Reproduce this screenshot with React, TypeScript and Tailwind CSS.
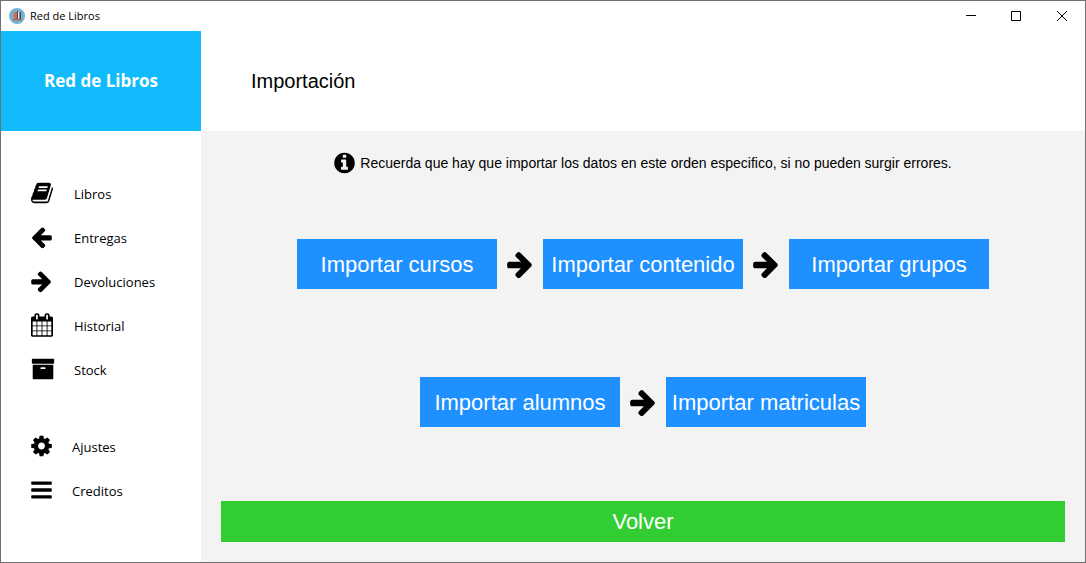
import type { ReactNode } from "react";

type IconProps = { viewBox: string; d: string; className: string };

function Icon({ viewBox, d, className }: IconProps) {
  return (
    <svg viewBox={viewBox} className={className} fill="currentColor" aria-hidden="true">
      <path d={d} />
    </svg>
  );
}

const BOOK =
  "M1703 478q40 57 18 129l-275 906q-19 64-76.5 107.5t-122.5 43.5h-923q-77 0-148.5-53.5t-99.5-131.5q-24-67-2-127 0-4 3-27t4-37q1-8-3-21.5t-3-19.5q2-11 8-21t16.5-23.5 16.5-23.5q23-38 45-91.5t30-91.5q3-10 .5-30t-.5-28q3-11 17-28t17-23q21-36 42-92t25-90q1-9-2.5-32t.5-28q4-13 22-30.5t22-22.5q19-26 42.5-84.5t27.5-96.5q1-8-3-25.5t-2-26.5q2-8 9-18t18-23 17-21q8-12 16.5-30.5t15-35 16-36 19.5-32 26.5-23.5 36-11.5 47.5 5.5l-1 3q38-9 51-9h761q74 0 114 56t18 130l-274 906q-36 119-71.5 153.5t-128.5 34.5h-869q-27 0-38 15-11 16-1 43 24 70 144 70h923q29 0 56-15.5t35-41.5l300-987q7-22 5-57 38 15 59 43zm-1064 2q-4 13 2 22.5t20 9.5h608q13 0 25.5-9.5t16.5-22.5l21-64q4-13-2-22.5t-20-9.5h-608q-13 0-25.5 9.5t-16.5 22.5zm-83 256q-4 13 2 22.5t20 9.5h608q13 0 25.5-9.5t16.5-22.5l21-64q4-13-2-22.5t-20-9.5h-608q-13 0-25.5 9.5t-16.5 22.5z";
const ARROW_LEFT =
  "M1664 896v128q0 53-32.5 90.5t-84.5 37.5h-704l293 294q38 36 38 90t-38 90l-75 76q-37 37-90 37-52 0-91-37l-651-652q-37-37-37-90 0-52 37-91l651-650q38-38 91-38 52 0 90 38l75 74q38 38 38 91t-38 91l-293 293h704q52 0 84.5 37.5t32.5 90.5z";
const ARROW_RIGHT =
  "M1600 960q0 54-37 91l-651 651q-39 37-91 37-51 0-90-37l-75-75q-38-38-38-91t38-91l293-293h-704q-52 0-84.5-37.5t-32.5-90.5v-128q0-53 32.5-90.5t84.5-37.5h704l-293-294q-38-36-38-90t38-90l75-75q38-38 90-38 53 0 91 38l651 651q37 35 37 90z";
const CALENDAR =
  "M192 1664h288v-288h-288v288zm352 0h320v-288h-320v288zm-352-352h288v-320h-288v320zm352 0h320v-320h-320v320zm-352-384h288v-288h-288v288zm736 736h320v-288h-320v288zm-384-736h320v-288h-320v288zm768 736h288v-288h-288v288zm-384-352h320v-320h-320v320zm-352-864v-288q0-13-9.5-22.5t-22.5-9.5h-64q-13 0-22.5 9.5t-9.5 22.5v288q0 13 9.5 22.5t22.5 9.5h64q13 0 22.5-9.5t9.5-22.5zm736 864h288v-320h-288v320zm-384-384h320v-288h-320v288zm384 0h288v-288h-288v288zm32-480v-288q0-13-9.5-22.5t-22.5-9.5h-64q-13 0-22.5 9.5t-9.5 22.5v288q0 13 9.5 22.5t22.5 9.5h64q13 0 22.5-9.5t9.5-22.5zm384-64v1280q0 52-38 90t-90 38h-1408q-52 0-90-38t-38-90v-1280q0-52 38-90t90-38h128v-96q0-66 47-113t113-47h64q66 0 113 47t47 113v96h384v-96q0-66 47-113t113-47h64q66 0 113 47t47 113v96h128q52 0 90 38t38 90z";
const ARCHIVE =
  "M1088 832q0-26-19-45t-45-19h-256q-26 0-45 19t-19 45 19 45 45 19h256q26 0 45-19t19-45zm576-192v960q0 26-19 45t-45 19h-1408q-26 0-45-19t-19-45v-960q0-26 19-45t45-19h1408q26 0 45 19t19 45zm64-448v256q0 26-19 45t-45 19h-1536q-26 0-45-19t-19-45v-256q0-26 19-45t45-19h1536q26 0 45 19t19 45z";
const COG =
  "M1152 896q0-106-75-181t-181-75-181 75-75 181 75 181 181 75 181-75 75-181zm512-109v222q0 12-8 23t-20 13l-185 28q-19 54-39 91 35 50 107 138 10 12 10 25t-9 23q-27 37-99 108t-94 71q-12 0-26-9l-138-108q-44 23-91 38-16 136-29 186-7 28-36 28h-222q-14 0-24.5-8.5t-11.5-21.5l-28-184q-49-16-90-37l-141 107q-10 9-25 9-14 0-25-11-126-114-165-168-7-10-7-23 0-12 8-23 15-21 51-66.5t54-70.5q-27-50-41-99l-183-27q-13-2-21-12.5t-8-23.5v-222q0-12 8-23t19-13l186-28q14-46 39-92-40-57-107-138-10-12-10-24 0-10 9-23 26-36 98.5-107.5t94.5-71.5q13 0 26 10l138 107q44-23 91-38 16-136 29-186 7-28 36-28h222q14 0 24.5 8.5t11.5 21.5l28 184q49 16 90 37l142-107q9-9 24-9 13 0 25 10 129 119 165 170 7 8 7 22 0 12-8 23-15 21-51 66.5t-54 70.5q26 50 41 98l183 28q13 2 21 12.5t8 23.5z";
const BARS =
  "M1664 1344v128q0 26-19 45t-45 19h-1408q-26 0-45-19t-19-45v-128q0-26 19-45t45-19h1408q26 0 45 19t19 45zm0-512v128q0 26-19 45t-45 19h-1408q-26 0-45-19t-19-45v-128q0-26 19-45t45-19h1408q26 0 45 19t19 45zm0-512v128q0 26-19 45t-45 19h-1408q-26 0-45-19t-19-45v-128q0-26 19-45t45-19h1408q26 0 45 19t19 45z";
const INFO =
  "M1152 1376v-160q0-14-9-23t-23-9h-96v-512q0-14-9-23t-23-9h-320q-14 0-23 9t-9 23v160q0 14 9 23t23 9h96v320h-96q-14 0-23 9t-9 23v160q0 14 9 23t23 9h448q14 0 23-9t9-23zm-128-896v-160q0-14-9-23t-23-9h-192q-14 0-23 9t-9 23v160q0 14 9 23t23 9h192q14 0 23-9t9-23zm640 416q0 209-103 385.5t-279.5 279.5-385.5 103-385.5-103-279.5-279.5-103-385.5 103-385.5 279.5-279.5 385.5-103 385.5 103 279.5 279.5 103 385.5z";

const mainLinks = [
  { label: "Libros", d: BOOK, viewBox: "64 0 1664 1792", size: "h-6 w-[22px]" },
  { label: "Entregas", d: ARROW_LEFT, viewBox: "128 0 1536 1792", size: "h-6 w-[21px]" },
  { label: "Devoluciones", d: ARROW_RIGHT, viewBox: "128 0 1536 1792", size: "h-6 w-[21px]" },
  { label: "Historial", d: CALENDAR, viewBox: "64 0 1664 1792", size: "h-6 w-[22px]" },
  { label: "Stock", d: ARCHIVE, viewBox: "0 0 1792 1792", size: "h-6 w-6" },
];

const extraLinks = [
  { label: "Ajustes", d: COG, viewBox: "128 0 1536 1792", size: "h-6 w-[21px]" },
  { label: "Creditos", d: BARS, viewBox: "128 0 1536 1792", size: "h-6 w-[21px]" },
];

const importRows = [
  ["Importar cursos", "Importar contenido", "Importar grupos"],
  ["Importar alumnos", "Importar matriculas"],
];

function NavLinks({ links, iconWidth }: { links: typeof mainLinks; iconWidth: string }) {
  return (
    <ul>
      {links.map((link) => (
        <li key={link.label}>
          <a href="#" className="flex h-11 items-center pl-[30px] text-[13px] leading-5 text-black">
            <span className={iconWidth}>
              <Icon d={link.d} viewBox={link.viewBox} className={link.size} />
            </span>
            {link.label}
          </a>
        </li>
      ))}
    </ul>
  );
}

function WindowButton({ label, children }: { label: string; children: ReactNode }) {
  return (
    <button type="button" aria-label={label} className="flex w-[46px] items-center justify-center">
      <svg viewBox="0 0 12 12" className="size-3" fill="none" stroke="black" aria-hidden="true">
        {children}
      </svg>
    </button>
  );
}

function AppLogo() {
  return (
    <svg viewBox="0 0 16 16" className="size-4" aria-hidden="true">
      <circle cx="8" cy="8" r="8" fill="#76b3d2" />
      <path d="M4 4.5h1.5V11H4z" fill="#a88a80" />
      <path d="M5.5 4H8v7H5.5z" fill="#d4694a" />
      <path d="M8 3h1v8H8z" fill="#3c4553" />
      <path d="M9 4h1.5v7H9z" fill="#f0ece8" />
      <path d="M10.5 4H12v7h-1.5z" fill="#3f4652" />
      <path d="M4 11h8.5v1.4H4z" fill="#bd5949" />
    </svg>
  );
}

export default function App() {
  return (
    <div className="flex min-h-screen flex-col border border-[#707070] bg-white font-['Open_Sans',sans-serif] text-black">
      <div className="flex h-[30px] justify-between">
        <div className="flex items-center gap-[5px] pl-2 text-[11px] leading-4">
          <AppLogo />
          <span>Red de Libros</span>
        </div>
        <div className="flex">
          <WindowButton label="Minimizar">
            <path d="M2 5.5h10" />
          </WindowButton>
          <WindowButton label="Maximizar">
            <path d="M1.5 1.5h9v9h-9z" />
          </WindowButton>
          <WindowButton label="Cerrar">
            <path d="M1 1l10 10M11 1L1 11" />
          </WindowButton>
        </div>
      </div>

      <div className="flex flex-1">
        <aside className="flex w-[200px] shrink-0 flex-col">
          <div className="flex h-[100px] items-center justify-center bg-[#11bbfb] text-[17px] leading-6 font-bold text-white">
            Red de Libros
          </div>
          <nav className="flex flex-col gap-[33px] pt-[41px]">
            <NavLinks links={mainLinks} iconWidth="w-[43px] pb-0.5" />
            <NavLinks links={extraLinks} iconWidth="w-[41px] pb-0.5" />
          </nav>
        </aside>

        <div className="flex flex-1 flex-col font-['Liberation_Sans',Arial,sans-serif]">
          <header className="flex h-[100px] items-center pl-[50px]">
            <h1 className="text-xl">Importación</h1>
          </header>

          <main className="flex flex-1 flex-col bg-[#f3f3f3]">
            <p className="flex h-16 items-center justify-center gap-[5px] text-sm">
              <Icon d={INFO} viewBox="128 0 1536 1792" className="h-6 w-[21px]" />
              Recuerda que hay que importar los datos en este orden especifico, si no pueden surgir errores.
            </p>

            <div className="grid flex-1 auto-rows-fr">
              {importRows.map((row) => (
                <div key={row[0]} className="flex items-center justify-center gap-[10px]">
                  {row.map((label, index) => (
                    <div key={label} className="flex items-center gap-[10px]">
                      {index > 0 && (
                        <Icon d={ARROW_RIGHT} viewBox="128 0 1536 1792" className="h-[30px] w-[26px]" />
                      )}
                      <button type="button" className="h-[50px] w-[200px] bg-[#1e90ff] text-[22px] whitespace-nowrap text-white">
                        {label}
                      </button>
                    </div>
                  ))}
                </div>
              ))}
            </div>

            <div className="px-5 pt-[30px] pb-5">
              <button type="button" className="h-[41px] w-full bg-[#32cd32] text-[22px] text-white">
                Volver
              </button>
            </div>
          </main>
        </div>
      </div>
    </div>
  );
}
